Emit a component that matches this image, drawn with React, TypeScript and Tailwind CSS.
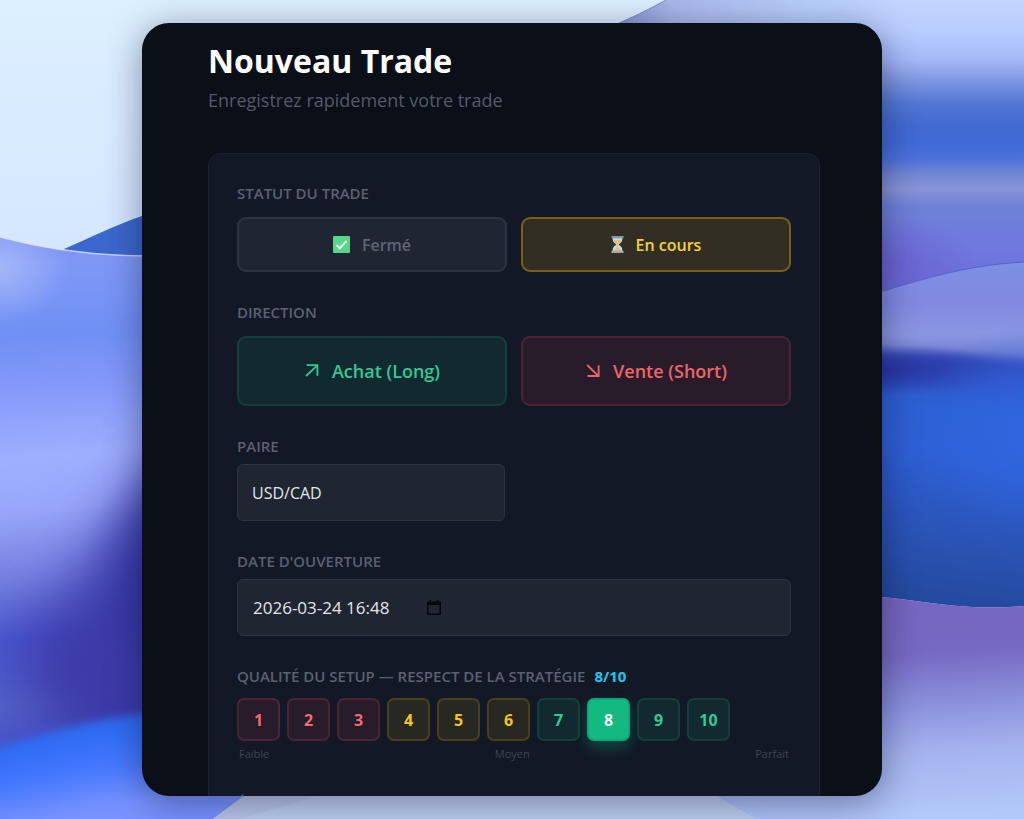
import { useState } from "react";
import type { ReactNode } from "react";
import clsx from "clsx";

const Wallpaper = () => (
  <svg
    className="absolute inset-0 h-full w-full"
    viewBox="0 0 1024 819"
    preserveAspectRatio="none"
    aria-hidden="true"
  >
    <defs>
      <linearGradient id="sky" x1="0" y1="0" x2="0" y2="1">
        <stop offset="0" stopColor="#dcf0ff" />
        <stop offset="0.3" stopColor="#d5e7ff" />
        <stop offset="1" stopColor="#bccdf0" />
      </linearGradient>
      <linearGradient id="leftWave" gradientUnits="userSpaceOnUse" x1="0" y1="237" x2="30" y2="740">
        <stop offset="0" stopColor="#7f95f2" />
        <stop offset="0.06" stopColor="#7e98f5" />
        <stop offset="0.2" stopColor="#7090f6" />
        <stop offset="0.3" stopColor="#8498fa" />
        <stop offset="0.44" stopColor="#9fafff" />
        <stop offset="0.54" stopColor="#98a7fb" />
        <stop offset="0.68" stopColor="#7480e0" />
        <stop offset="0.8" stopColor="#4a58d2" />
        <stop offset="0.93" stopColor="#5363cc" />
        <stop offset="1" stopColor="#4a55c8" />
      </linearGradient>
      <linearGradient id="leftFloor" gradientUnits="userSpaceOnUse" x1="30" y1="720" x2="50" y2="819">
        <stop offset="0" stopColor="#3565dc" />
        <stop offset="0.25" stopColor="#2f6cf4" />
        <stop offset="0.6" stopColor="#4578ff" />
        <stop offset="1" stopColor="#7892ff" />
      </linearGradient>
      <linearGradient id="rightBack" gradientUnits="userSpaceOnUse" x1="0" y1="0" x2="0" y2="300">
        <stop offset="0" stopColor="#c0d5ff" />
        <stop offset="0.1" stopColor="#b9ceff" />
        <stop offset="0.2" stopColor="#a5b8f6" />
        <stop offset="0.27" stopColor="#7f96df" />
        <stop offset="0.34" stopColor="#5479d6" />
        <stop offset="0.41" stopColor="#436ad0" />
        <stop offset="0.47" stopColor="#3f69d5" />
        <stop offset="0.53" stopColor="#4c71da" />
        <stop offset="0.58" stopColor="#7386d4" />
        <stop offset="0.63" stopColor="#8894d5" />
        <stop offset="0.69" stopColor="#6f80d8" />
        <stop offset="0.84" stopColor="#6f78de" />
        <stop offset="1" stopColor="#6d68d4" />
      </linearGradient>
      <linearGradient id="topLight" x1="0" y1="0" x2="1" y2="0">
        <stop offset="0" stopColor="#8593cd" />
        <stop offset="0.2" stopColor="#aab9ec" />
        <stop offset="0.7" stopColor="#b9d0fd" />
        <stop offset="1" stopColor="#bcd0ff" stopOpacity="0" />
      </linearGradient>
      <linearGradient id="rightWave" gradientUnits="userSpaceOnUse" x1="0" y1="262" x2="0" y2="365">
        <stop offset="0" stopColor="#7b90e4" />
        <stop offset="0.4" stopColor="#8189e0" />
        <stop offset="0.7" stopColor="#8b96e3" />
        <stop offset="1" stopColor="#6c76c8" />
      </linearGradient>
      <linearGradient id="rightBlue" gradientUnits="userSpaceOnUse" x1="960" y1="350" x2="925" y2="605">
        <stop offset="0" stopColor="#3344b4" />
        <stop offset="0.1" stopColor="#3051c4" />
        <stop offset="0.22" stopColor="#2d60d3" />
        <stop offset="0.4" stopColor="#2e60d6" />
        <stop offset="0.65" stopColor="#2b56bd" />
        <stop offset="1" stopColor="#24499c" />
      </linearGradient>
      <linearGradient id="rightFloor" gradientUnits="userSpaceOnUse" x1="900" y1="600" x2="915" y2="819">
        <stop offset="0" stopColor="#7666c0" />
        <stop offset="0.25" stopColor="#7669c2" />
        <stop offset="0.5" stopColor="#8d93de" />
        <stop offset="0.7" stopColor="#a5b3ee" />
        <stop offset="1" stopColor="#b2c8fa" />
      </linearGradient>
      <radialGradient id="leftGlow">
        <stop offset="0" stopColor="#a9b9fa" stopOpacity="0.9" />
        <stop offset="1" stopColor="#a9b9fa" stopOpacity="0" />
      </radialGradient>
      <radialGradient id="violetGlow">
        <stop offset="0" stopColor="#6a5ccc" stopOpacity="0.8" />
        <stop offset="1" stopColor="#6a5ccc" stopOpacity="0" />
      </radialGradient>
      <radialGradient id="blueGlow">
        <stop offset="0" stopColor="#3168e4" />
        <stop offset="1" stopColor="#3168e4" stopOpacity="0" />
      </radialGradient>
      <radialGradient id="navyGlow">
        <stop offset="0" stopColor="#28309a" stopOpacity="0.9" />
        <stop offset="1" stopColor="#28309a" stopOpacity="0" />
      </radialGradient>
      <filter id="softEdge" x="-30%" y="-30%" width="160%" height="160%" colorInterpolationFilters="sRGB">
        <feGaussianBlur stdDeviation="5" />
      </filter>
      <filter id="softFold" x="-60%" y="-60%" width="220%" height="220%" colorInterpolationFilters="sRGB">
        <feGaussianBlur stdDeviation="30" />
      </filter>
      <clipPath id="leftClip">
        <path d="M0 237C45 249 92 256 150 256H400V819H0Z" />
      </clipPath>
      <clipPath id="blueClip">
        <path d="M800 300H1024V606C970 611 930 602 882 597L800 590Z" />
      </clipPath>
    </defs>

    <rect width="1024" height="819" fill="url(#sky)" />

    {/* left side */}
    <path d="M64 249C90 238 115 225 142 216L300 180V300H100Z" fill="#3c67cc" />
    <g clipPath="url(#leftClip)">
      <path d="M0 230H240V819H0Z" fill="url(#leftWave)" />
      <ellipse cx="0" cy="268" rx="70" ry="55" fill="url(#leftGlow)" />
      <path d="M10 655L75 590L150 475L240 440V790H90Z" fill="#3d3aa8" filter="url(#softFold)" />
      <ellipse cx="170" cy="570" rx="90" ry="110" fill="url(#navyGlow)" opacity="0.5" />
      <path d="M-40 762C40 732 90 720 142 714L260 705V880H-40Z" fill="url(#leftFloor)" filter="url(#softEdge)" />
    </g>
    <path d="M0 237C45 249 92 256 150 256" fill="none" stroke="#dfe6ff" strokeWidth="1.5" opacity="0.8" />
    <path d="M213 819L245 795H780V819Z" fill="#bdcff0" />
    <path d="M213 819L245 795H320L240 819Z" fill="#b7bfe6" opacity="0.6" />

    {/* right side */}
    <path d="M620 22C640 14 655 6 666 0H1024V310H800V22Z" fill="url(#rightBack)" />
    <path d="M617 24C640 14 655 6 666 0H900V24Z" fill="url(#topLight)" />
    <path d="M617 24C640 14 655 6 666 0" fill="none" stroke="#8390bd" />
    <ellipse cx="880" cy="265" rx="100" ry="50" fill="url(#violetGlow)" />
    <path d="M860 298C920 280 965 265 1024 262V390H860Z" fill="url(#rightWave)" />
    <path d="M860 298C920 280 965 265 1024 262" fill="none" stroke="#5862cc" />
    <g clipPath="url(#blueClip)">
      <path d="M840 354C930 349 980 356 1060 364V640H840Z" fill="url(#rightBlue)" filter="url(#softEdge)" />
      <ellipse cx="880" cy="370" rx="130" ry="26" fill="url(#navyGlow)" />
      <ellipse cx="1040" cy="430" rx="120" ry="110" fill="url(#blueGlow)" opacity="0.8" />
    </g>
    <path d="M700 580L882 597C930 602 970 611 1024 606V819H756L715 795H700Z" fill="url(#rightFloor)" />
  </svg>
);

const CheckMark = () => (
  <svg className="h-[17px] w-[17px]" viewBox="0 0 17 17" aria-hidden="true">
    <rect width="17" height="17" rx="1" fill="#56d68b" />
    <path d="M3.5 9L6.8 12.2L13.5 5" fill="none" stroke="#ecfff3" strokeWidth="2" />
  </svg>
);

const Hourglass = () => (
  <svg className="h-[17px] w-[13px]" viewBox="0 0 13 17" aria-hidden="true">
    <path d="M1.5 2H11.5C11.5 5.5 10 7 7.6 8.5C10 10 11.5 11.5 11.5 15H1.5C1.5 11.5 3 10 5.4 8.5C3 7 1.5 5.5 1.5 2Z" fill="#b9dcf2" />
    <path d="M2.6 4H10.4C10 6 8.5 7 6.9 8.2V11L10.4 15H2.6L6.1 11V8.2C4.5 7 3 6 2.6 4Z" fill="#f0b968" />
    <rect x="0.5" width="12" height="2.2" rx="0.5" fill="#8d9399" />
    <rect x="0.5" y="14.8" width="12" height="2.2" rx="0.5" fill="#a3a8ac" />
  </svg>
);

const ArrowUp = () => (
  <svg className="h-4 w-4" viewBox="0 0 16 16" fill="none" stroke="currentColor" strokeWidth="1.8" aria-hidden="true">
    <path d="M2 13L13.2 2.6M2.6 2.2H13.4V12.8" />
  </svg>
);

const ArrowDown = () => (
  <svg className="h-4 w-4" viewBox="0 0 16 16" fill="none" stroke="currentColor" strokeWidth="1.8" aria-hidden="true">
    <path d="M2.2 2L13 12.6M13.6 2.2V13H2.6" />
  </svg>
);

const CalendarIcon = () => (
  <svg className="h-[15px] w-[14px]" viewBox="0 0 14 15" aria-hidden="true">
    <path d="M0.8 2.3H13.2V14.2H0.8Z" fill="none" stroke="#05080c" strokeWidth="1.5" />
    <path d="M0.5 2H13.5V5H0.5ZM2.5 0H4.2V2H2.5ZM9.8 0H11.5V2H9.8Z" fill="#05080c" />
  </svg>
);

const labelClass = "block text-[15px] leading-[22px] font-semibold uppercase text-[#5a6170]";

const Choice = ({ className, onClick, children }: { className: string; onClick: () => void; children: ReactNode }) => (
  <button
    type="button"
    onClick={onClick}
    className={clsx("flex items-center justify-center gap-3 rounded-[9px] border-2", className)}
  >
    {children}
  </button>
);

const scoreTone = (n: number) => {
  if (n <= 3) return "border-[#4b2430] bg-[#291c2a] text-[#f36a6d]";
  if (n <= 6) return "border-[#4a3e1c] bg-[#282822] text-[#f5c516]";
  return "border-[#124039] bg-[#122930] text-[#2fcb92]";
};

const App = () => {
  const [status, setStatus] = useState("open");
  const [, setDirection] = useState("");
  const [score, setScore] = useState(8);

  return (
    <div className="relative flex h-screen justify-center overflow-hidden py-[23px] font-['Open_Sans','Noto_Sans',sans-serif]">
      <Wallpaper />
      <main className="relative h-full w-full max-w-[740px] overflow-hidden rounded-[27px] bg-[#0b0f18] pt-4 pr-[62px] pl-[66px] shadow-[0_6px_36px_rgba(5,10,35,0.42)]">
        <h1 className="text-[32px] leading-[44px] font-bold text-white">Nouveau Trade</h1>
        <p className="mt-1 text-[18px] leading-[26px] text-[#535a69]">Enregistrez rapidement votre trade</p>

        <form className="mt-10 flex flex-col gap-[29px] rounded-[12px] border border-[#1b2230] bg-[#121826] p-7">
          <fieldset>
            <legend className={labelClass}>Statut du trade</legend>
            <div className="mt-[13px] grid grid-cols-2 gap-[14px]">
              <Choice
                onClick={() => setStatus("closed")}
                className={clsx(
                  "h-[55px] text-[16px] font-semibold",
                  status === "closed" ? "border-[#136b50] bg-[#12332f] text-[#2fcb92]" : "border-[#2d3441] bg-[#1f2531] text-[#5f6674]"
                )}
              >
                <CheckMark />
                Fermé
              </Choice>
              <Choice
                onClick={() => setStatus("open")}
                className={clsx(
                  "h-[55px] text-[16px] font-semibold",
                  status === "open" ? "border-[#7a6014] bg-[#322e24] text-[#f3d33c]" : "border-[#2d3441] bg-[#1f2531] text-[#5f6674]"
                )}
              >
                <Hourglass />
                En cours
              </Choice>
            </div>
          </fieldset>

          <fieldset>
            <legend className={labelClass}>Direction</legend>
            <div className="mt-[13px] grid grid-cols-2 gap-[14px]">
              <Choice
                onClick={() => setDirection("long")}
                className="h-[70px] border-[#124039] bg-[#122930] text-[18px] font-semibold text-[#2fcb92]"
              >
                <ArrowUp />
                Achat (Long)
              </Choice>
              <Choice
                onClick={() => setDirection("short")}
                className="h-[70px] border-[#4b2430] bg-[#291c2a] text-[18px] font-semibold text-[#ef6467]"
              >
                <ArrowDown />
                Vente (Short)
              </Choice>
            </div>
          </fieldset>

          <div className="grid grid-cols-2 gap-[19px]">
            <div>
              <label htmlFor="pair" className={labelClass}>Paire</label>
              <input
                id="pair"
                defaultValue="USD/CAD"
                className="mt-[7px] block h-[57px] w-full rounded-[6px] border border-[#2d3440] bg-[#1f2531] px-[14px] text-[16px] text-[#e3e5e8]"
              />
            </div>
          </div>

          <div>
            <label htmlFor="opened" className={labelClass}>Date d'ouverture</label>
            <div className="mt-[7px] flex h-[57px] items-center rounded-[6px] border border-[#2d3440] bg-[#1f2531] px-[15px]">
              <input
                id="opened"
                defaultValue="2026-03-24 16:48"
                className="w-[174px] bg-transparent text-[17px] text-[#e3e5e8]"
              />
              <button type="button" aria-label="Calendrier">
                <CalendarIcon />
              </button>
            </div>
          </div>

          <fieldset>
            <legend className={labelClass}>
              Qualité du setup — respect de la stratégie
              <span className="ml-[9px] font-bold text-[#1cc8ee]">{score}/10</span>
            </legend>
            <div className="mt-[11px] flex gap-[7px]">
              {[1, 2, 3, 4, 5, 6, 7, 8, 9, 10].map((n) => (
                <button
                  key={n}
                  type="button"
                  onClick={() => setScore(n)}
                  className={clsx(
                    "h-[43px] w-[43px] rounded-[7px] border-2 text-[16px] font-bold",
                    n === score
                      ? "border-[#10a775] bg-[#12b981] text-white shadow-[0_7px_14px_rgba(16,185,129,0.3)]"
                      : scoreTone(n)
                  )}
                >
                  {n}
                </button>
              ))}
            </div>
            <div className="mt-[5px] flex justify-between px-[2px] text-[11px] leading-[16px] text-[#3d4452]">
              <span>Faible</span>
              <span>Moyen</span>
              <span>Parfait</span>
            </div>
          </fieldset>

          <div>
            <label htmlFor="emotion" className={labelClass}>Émotion</label>
            <input id="emotion" className="mt-[7px] block h-[57px] w-full rounded-[6px] border border-[#2d3440] bg-[#1f2531] px-[14px]" />
          </div>
        </form>
      </main>
    </div>
  );
};

export default App;
